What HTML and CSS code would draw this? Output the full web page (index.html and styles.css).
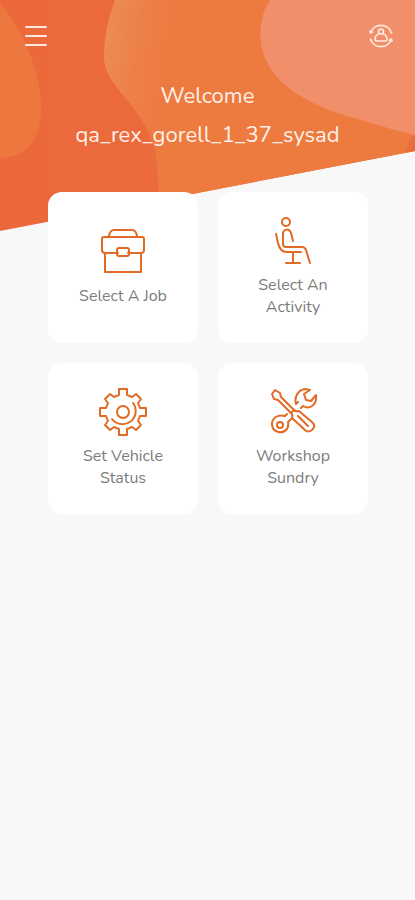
FILE: index.html
```html
<!DOCTYPE html>
<html lang="en">
<head>
<meta charset="utf-8">
<meta name="viewport" content="width=device-width, initial-scale=1">
<title>Welcome</title>
<link rel="stylesheet" href="styles.css">
</head>
<body>
<svg class="backdrop" viewBox="0 0 415 232" preserveAspectRatio="none" aria-hidden="true">
  <defs>
    <linearGradient id="base"><stop offset="0" stop-color="#ec683b"/><stop offset="1" stop-color="#ea7041"/></linearGradient>
    <linearGradient id="wave" gradientUnits="userSpaceOnUse" x1="104" y1="50" x2="175" y2="60"><stop offset="0" stop-color="#ed8b55"/><stop offset=".5" stop-color="#ed7f48"/><stop offset="1" stop-color="#ed7a3f"/></linearGradient>
    <linearGradient id="corner" gradientUnits="userSpaceOnUse" x1="400" y1="140" x2="415" y2="145"><stop offset="0" stop-color="#ea7040" stop-opacity="0"/><stop offset="1" stop-color="#e9693c"/></linearGradient>
    <clipPath id="slope"><path d="M0 0H415V151L0 231Z"/></clipPath>
  </defs>
  <g clip-path="url(#slope)">
    <path fill="url(#base)" d="M0 0H415V232H0Z"/>
    <path fill="#ed783f" d="M0 3C22 30 40 68 41 106C42 138 27 158 0 158Z"/>
    <path fill="url(#wave)" d="M115 0C107 21 104 40 104 58C105 84 134 101 147 129C156 145 159 166 158 202H415V0Z"/>
    <path fill="url(#corner)" d="M415 134C409 139 407 147 403 154H415Z"/>
    <path fill="#f18f6a" d="M270 0C260 15 258 35 263 53C275 88 312 105 350 117C375 124 397 131 415 135V0Z"/>
  </g>
</svg>
<header class="topbar">
  <button class="icon-button" type="button" aria-label="Open menu">
    <svg width="22" height="24" viewBox="0 0 22 24"><path d="M1 3H21M1 12H21M1 21H21"/></svg>
  </button>
  <button class="icon-button" type="button" aria-label="Switch user">
    <svg class="thin" width="26" height="26" viewBox="0 0 26 26"><path d="M2.500 10A11 11 0 0 1 23.500 10M23.500 16A11 11 0 0 1 2.500 16M2 8L2.500 10L4.500 9M24 18L23.500 16L21.500 17"/><circle cx="13" cy="8.500" r="2.500"/><path d="M10.500 11C8 12 7 14 7 16.500Q7 18 8.500 18H17.500Q19 18 19 16.500C19 14 18 12 15.500 11"/></svg>
  </button>
</header>
<main>
  <div class="welcome">
    <h1>Welcome</h1>
    <p>qa_rex_gorell_1_37_sysad</p>
  </div>
  <nav class="tiles" aria-label="Actions">
    <a class="tile" href="#job">
      <svg width="50" height="48" viewBox="0 0 50 48"><path d="M11 9V8Q12 2 16 2H34Q38 2 39 8V9M20 25H7Q4 25 4 22V11Q4 9 6 9H44Q46 9 46 11V22Q46 25 43 25H30M7 25V44H43V25"/><rect x="19" y="20" width="12" height="8" rx="2"/></svg>
      <span>Select A Job</span>
    </a>
    <a class="tile" href="#activity">
      <svg width="50" height="48" viewBox="0 0 50 48"><circle cx="18" cy="5" r="4"/><path d="M8 17L10 26Q12 35 19 35H33M25 24L23 16C21 11 16 12 15 16V27Q15 30 18 30H34Q37 30 38 33L42 46M25 35V46M18 46H32"/></svg>
      <span>Select An Activity</span>
    </a>
    <a class="tile" href="#vehicle">
      <svg width="50" height="48" viewBox="-25 -24 50 48"><path d="M-4 -23H4V-17L9 -15L13 -18L18 -13L15 -9L17 -4H23V4H17L15 9L18 13L13 18L9 15L4 17V23H-4V17L-9 15L-13 18L-18 13L-15 9L-17 4H-23V-4H-17L-15 -9L-18 -13L-13 -18L-9 -15L-4 -17Z"/><circle r="6"/><path d="M10 -9A13 13 0 0 1 -11 7"/></svg>
      <span>Set Vehicle Status</span>
    </a>
    <a class="tile" href="#workshop">
      <svg width="50" height="48" viewBox="0 0 50 48"><path d="M4 6L7 2L12 5L13 9L26 22L23 25L10 12L6 11ZM23 25Q25 27 24 30L37 42Q40 45 44 42Q48 38 45 35L31 23Q28 24 26 22M30 28L40 38M28 16C26 9 30 2 37 1L42 2L36 6L38 12L43 13L48 7Q49 15 44 18Q40 21 35 18L33 20M28 16L30 14M17 28L19 26M17 28C10 26 4 30 4 36C4 44 14 47 19 41Q21 37 20 34L23 31"/><circle cx="12" cy="37" r="3"/></svg>
      <span>Workshop Sundry</span>
    </a>
  </nav>
</main>
</body>
</html>
```
FILE: styles.css
```css
* {
  box-sizing: border-box;
}

body {
  position: relative;
  min-height: 100vh;
  margin: 0;
  background: #f8f8f8;
  font-family: Nunito, Lato, sans-serif;
}

svg {
  fill: none;
  stroke: currentColor;
  stroke-width: 2;
  stroke-linejoin: round;
  stroke-linecap: round;
}

.backdrop {
  position: absolute;
  z-index: -1;
  top: 0;
  left: 0;
  width: 100%;
  height: 232px;
  stroke: none;
}

.topbar {
  display: flex;
  align-items: center;
  justify-content: space-between;
  padding: 20px 18px 0 20px;
}

.icon-button {
  display: grid;
  place-items: center;
  width: 32px;
  height: 32px;
  padding: 0;
  border: 0;
  background: transparent;
  color: #ffe9df;
}

.thin {
  stroke-width: 1.7;
}

.welcome {
  padding-top: 25px;
  color: #fff1e9;
  font-size: 22px;
  line-height: 39px;
  text-align: center;
}

.welcome h1,
.welcome p {
  margin: 0;
  font-size: inherit;
  font-weight: 400;
}

.tiles {
  display: grid;
  grid-template-columns: 1fr 1fr;
  gap: 20px;
  max-width: 520px;
  margin: 0 auto;
  padding: 37px 47px 37px 48px;
}

.tile {
  display: flex;
  flex-direction: column;
  align-items: center;
  justify-content: center;
  gap: 9px;
  min-height: 151px;
  padding: 15px 24px 16px;
  border-radius: 14px;
  background: #fff;
  color: #7c7c7c;
  font-size: 16px;
  line-height: 22px;
  text-align: center;
  text-decoration: none;
}

.tile svg {
  color: #e16b25;
}
```
